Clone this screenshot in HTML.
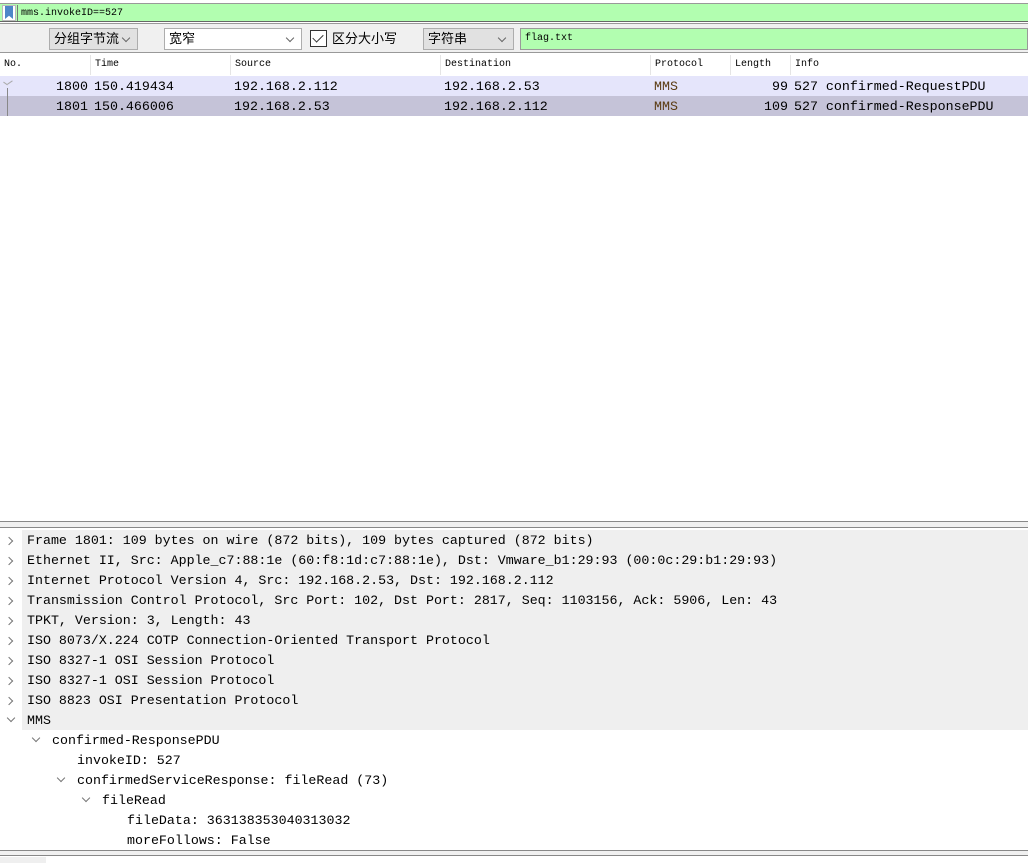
<!DOCTYPE html>
<html><head><meta charset="utf-8">
<style>
*{margin:0;padding:0;box-sizing:border-box}
body{width:1028px;height:863px;overflow:hidden;background:#fff;font-family:"Liberation Mono","DejaVu Sans Mono",monospace;position:relative;color:#000}
.abs{position:absolute}
.cjk{font-family:"Liberation Sans","Noto Sans CJK SC",sans-serif}
.sel{position:absolute;top:28px;height:22px;border:1px solid #adadad;background:#e1e1e1;font-size:13px;line-height:20px;padding-left:4px}
.sel .ar{position:absolute;right:8px;top:6px;width:6px;height:6px;border-right:1px solid #666;border-bottom:1px solid #666;transform:rotate(45deg)}
.hdr{position:absolute;top:55px;height:20px;font-size:10px;line-height:20px;font-family:"Liberation Mono",monospace;border-left:1px solid #e5e5e5;padding-left:4px}
.row{position:absolute;left:0;width:1028px;height:20px;font-size:13.3px;line-height:20px}
.row span{position:absolute;top:1px}
.t{position:absolute;left:0;width:1028px;height:20px;font-size:13.3px;line-height:21px;white-space:pre}
.g{background:#efefef}
.chev{position:absolute;width:6px;height:6px;border-right:1.3px solid #777;border-bottom:1.3px solid #777}
.r{transform:rotate(-45deg)}
.d{transform:rotate(45deg)}
</style></head><body>
<div class="abs" style="left:0;top:3px;width:1028px;height:1px;background:#999"></div>
<div class="abs" style="left:0;top:4px;width:1028px;height:18px;background:#b2feb0;border-bottom:1px solid #666"></div>
<div class="abs" style="left:2px;top:5px;width:14px;height:16px;background:#fff;border:1px solid #bbb"></div>
<div class="abs" style="left:5px;top:6px;width:8px;height:13px;background:#4d86c8;clip-path:polygon(0 0,100% 0,100% 100%,50% 75%,0 100%)"></div>
<div class="abs" style="left:17px;top:5px;width:1px;height:16px;background:#777"></div>
<div class="abs" style="left:21px;top:5px;font-size:10px;line-height:18px">mms.invokeID==527</div>
<div class="abs" style="left:0;top:23px;width:1028px;height:30px;background:#f0f0f0;border-top:1px solid #999;border-bottom:1px solid #999"></div>
<div class="sel cjk" style="left:49px;width:89px">分组字节流<div class="ar"></div></div>
<div class="sel cjk" style="left:164px;width:138px;background:#fff">宽窄<div class="ar"></div></div>
<div class="abs" style="left:310px;top:30px;width:17px;height:17px;border:1px solid #333;background:#fff"></div>
<div class="abs" style="left:315px;top:32px;width:6px;height:10px;border-right:1.5px solid #333;border-bottom:1.5px solid #333;transform:rotate(45deg)"></div>
<div class="abs cjk" style="left:332px;top:29px;font-size:13px;line-height:20px">区分大小写</div>
<div class="sel cjk" style="left:423px;width:91px">字符串<div class="ar"></div></div>
<div class="abs" style="left:520px;top:28px;width:508px;height:22px;background:#b2feb0;border:1px solid #999;font-size:10px;line-height:20px;padding-left:4px">flag.txt</div>
<div class="hdr" style="left:0;border:none">No.</div>
<div class="hdr" style="left:90px">Time</div>
<div class="hdr" style="left:230px">Source</div>
<div class="hdr" style="left:440px">Destination</div>
<div class="hdr" style="left:650px">Protocol</div>
<div class="hdr" style="left:730px">Length</div>
<div class="hdr" style="left:790px">Info</div>
<div class="row" style="top:76px;background:#e5e5fb">
<span style="left:56px">1800</span><span style="left:94px">150.419434</span><span style="left:234px">192.168.2.112</span><span style="left:444px">192.168.2.53</span><span style="left:654px;color:#5a3a10">MMS</span><span style="left:772px">99</span><span style="left:794px">527 confirmed-RequestPDU</span></div>
<div class="row" style="top:96px;background:#c5c3d8">
<span style="left:56px">1801</span><span style="left:94px">150.466006</span><span style="left:234px">192.168.2.53</span><span style="left:444px">192.168.2.112</span><span style="left:654px;color:#5a3a10">MMS</span><span style="left:764px">109</span><span style="left:794px">527 confirmed-ResponsePDU</span></div>
<div class="abs" style="left:7px;top:88px;width:1px;height:28px;background:#888"></div>
<div class="abs" style="left:3px;top:83px;width:5px;height:1px;background:#aaa;transform:rotate(35deg)"></div>
<div class="abs" style="left:7px;top:82px;width:6px;height:1px;background:#aaa;transform:rotate(-35deg)"></div>
<div class="abs" style="left:0;top:521px;width:1028px;height:1px;background:#888"></div>
<div class="abs" style="left:0;top:522px;width:1028px;height:6px;background:#f0f0f0;border-bottom:1px solid #888"></div>
<div class="t g" style="top:530px;padding-left:27px">Frame 1801: 109 bytes on wire (872 bits), 109 bytes captured (872 bits)</div>
<div class="t g" style="top:550px;padding-left:27px">Ethernet II, Src: Apple_c7:88:1e (60:f8:1d:c7:88:1e), Dst: Vmware_b1:29:93 (00:0c:29:b1:29:93)</div>
<div class="t g" style="top:570px;padding-left:27px">Internet Protocol Version 4, Src: 192.168.2.53, Dst: 192.168.2.112</div>
<div class="t g" style="top:590px;padding-left:27px">Transmission Control Protocol, Src Port: 102, Dst Port: 2817, Seq: 1103156, Ack: 5906, Len: 43</div>
<div class="t g" style="top:610px;padding-left:27px">TPKT, Version: 3, Length: 43</div>
<div class="t g" style="top:630px;padding-left:27px">ISO 8073/X.224 COTP Connection-Oriented Transport Protocol</div>
<div class="t g" style="top:650px;padding-left:27px">ISO 8327-1 OSI Session Protocol</div>
<div class="t g" style="top:670px;padding-left:27px">ISO 8327-1 OSI Session Protocol</div>
<div class="t g" style="top:690px;padding-left:27px">ISO 8823 OSI Presentation Protocol</div>
<div class="t g" style="top:710px;padding-left:27px">MMS</div>
<div class="t" style="top:730px;padding-left:52px">confirmed-ResponsePDU</div>
<div class="t" style="top:750px;padding-left:77px">invokeID: 527</div>
<div class="t" style="top:770px;padding-left:77px">confirmedServiceResponse: fileRead (73)</div>
<div class="t" style="top:790px;padding-left:102px">fileRead</div>
<div class="t" style="top:810px;padding-left:127px">fileData: 363138353040313032</div>
<div class="t" style="top:830px;padding-left:127px">moreFollows: False</div>
<div class="abs" style="left:0;top:530px;width:22px;height:200px;background:#fff"></div>
<div class="chev r" style="left:6px;top:538px"></div>
<div class="chev r" style="left:6px;top:558px"></div>
<div class="chev r" style="left:6px;top:578px"></div>
<div class="chev r" style="left:6px;top:598px"></div>
<div class="chev r" style="left:6px;top:618px"></div>
<div class="chev r" style="left:6px;top:638px"></div>
<div class="chev r" style="left:6px;top:658px"></div>
<div class="chev r" style="left:6px;top:678px"></div>
<div class="chev r" style="left:6px;top:698px"></div>
<div class="chev d" style="left:8px;top:715px"></div>
<div class="chev d" style="left:33px;top:735px"></div>
<div class="chev d" style="left:58px;top:775px"></div>
<div class="chev d" style="left:83px;top:795px"></div>
<div class="abs" style="left:0;top:850px;width:1028px;height:1px;background:#888"></div>
<div class="abs" style="left:0;top:851px;width:1028px;height:5px;background:#f0f0f0;border-bottom:1px solid #888"></div>
<div class="abs" style="left:0;top:857px;width:46px;height:6px;background:#efefef"></div>
</body></html>
